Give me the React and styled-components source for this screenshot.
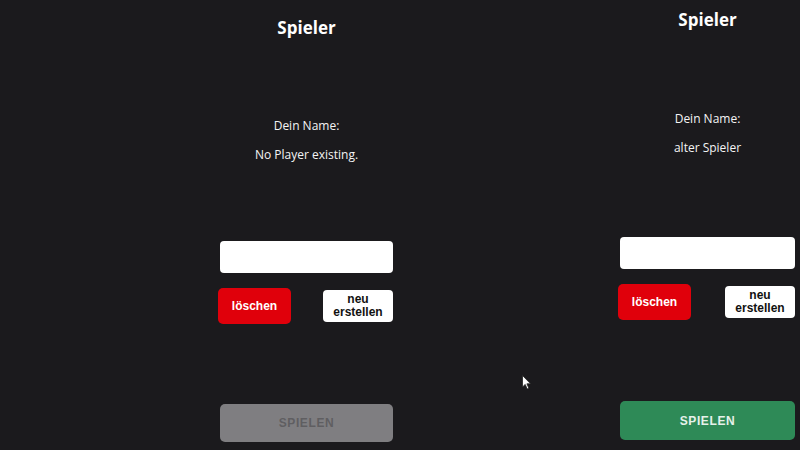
import React from 'react';
import styled, { createGlobalStyle } from 'styled-components';

const Global = createGlobalStyle`
  html, body { margin: 0; padding: 0; background: #1b1a1d; }
  body { width: 800px; height: 450px; overflow: hidden; }
`;

const Page = styled.div`
  position: relative;
  display: flex;
  flex-flow: row;
  width: 800px;
  height: 450px;
  background: #1b1a1d;
  overflow: hidden;
`;

const Screen = styled.div`
  display: flex;
  flex-flow: column;
  align-items: stretch;
  width: ${p => p.$w}px;
  margin-left: ${p => p.$left}px;
  padding-top: ${p => p.$top}px;
`;

const Title = styled.div`
  font-family: 'Open Sans', 'Noto Sans', sans-serif;
  font-weight: 700;
  font-size: 17px;
  line-height: 24px;
  color: #ffffff;
  text-align: center;
`;

const Label = styled.div`
  font-family: 'Open Sans', 'Noto Sans', sans-serif;
  font-size: 12px;
  line-height: 18px;
  color: #f4f4f4;
  text-align: center;
  margin-top: ${p => p.$mt}px;
`;

const NameInput = styled.div`
  height: 32px;
  background: #ffffff;
  border-radius: 4px;
  margin-top: ${p => p.$mt}px;
`;

const ButtonRow = styled.div`
  display: flex;
  flex-flow: row;
  justify-content: space-between;
  align-items: center;
  margin-top: ${p => p.$mt}px;
  margin-left: -2px;
`;

const DeleteButton = styled.div`
  width: 73px;
  height: 36px;
  background: #e0000b;
  border-radius: 5px;
  display: flex;
  align-items: center;
  justify-content: center;
  font-family: 'Liberation Sans', Arial, sans-serif;
  font-weight: 700;
  font-size: 12px;
  color: #ffffff;
`;

const CreateButton = styled.div`
  width: 70px;
  height: 32px;
  background: #ffffff;
  border-radius: 4px;
  display: flex;
  align-items: center;
  justify-content: center;
  text-align: center;
  font-family: 'Liberation Sans', Arial, sans-serif;
  font-weight: 700;
  font-size: 12px;
  line-height: 13px;
  color: #111111;
`;

const PlayButton = styled.div`
  height: ${p => p.$h}px;
  margin-top: ${p => p.$mt}px;
  border-radius: 5px;
  background: ${p => (p.$active ? '#2e8a57' : '#7f7e81')};
  color: ${p => (p.$active ? '#e6f1ea' : '#5f5e61')};
  display: flex;
  align-items: center;
  justify-content: center;
  font-family: 'Liberation Sans', Arial, sans-serif;
  font-weight: 700;
  font-size: 12px;
  letter-spacing: 0.6px;
`;

const Cursor = styled.svg`
  position: absolute;
  left: 522px;
  top: 375px;
`;

const PlayerScreen = ({ layout, name, active }) => (
  <Screen $w={layout.w} $left={layout.left} $top={layout.top}>
    <Title>Spieler</Title>
    <Label $mt={layout.name}>Dein Name:</Label>
    <Label $mt={layout.player}>{name}</Label>
    <NameInput $mt={layout.input} />
    <ButtonRow $mt={layout.buttons}>
      <DeleteButton>löschen</DeleteButton>
      <CreateButton>neu<br />erstellen</CreateButton>
    </ButtonRow>
    <PlayButton $active={active} $mt={layout.play} $h={layout.playH}>SPIELEN</PlayButton>
  </Screen>
);

const leftLayout = { w: 173, left: 220, top: 16, name: 77, player: 11, input: 77, buttons: 15, play: 80, playH: 38 };
const rightLayout = { w: 175, left: 227, top: 8, name: 78, player: 11, input: 80, buttons: 15, play: 81, playH: 39 };

export default function App() {
  return (
    <>
      <Global />
      <Page>
        <PlayerScreen layout={leftLayout} name="No Player existing." active={false} />
        <PlayerScreen layout={rightLayout} name="alter Spieler" active />
        <Cursor width="10" height="15" viewBox="0 0 10 15">
          <path d="M0.5 0.5 L0.5 12 L3.2 9.4 L5.2 14 L6.9 13.3 L4.9 8.8 L8.6 8.8 Z" fill="#ffffff" stroke="#222" strokeWidth="0.8" />
        </Cursor>
      </Page>
    </>
  );
}
